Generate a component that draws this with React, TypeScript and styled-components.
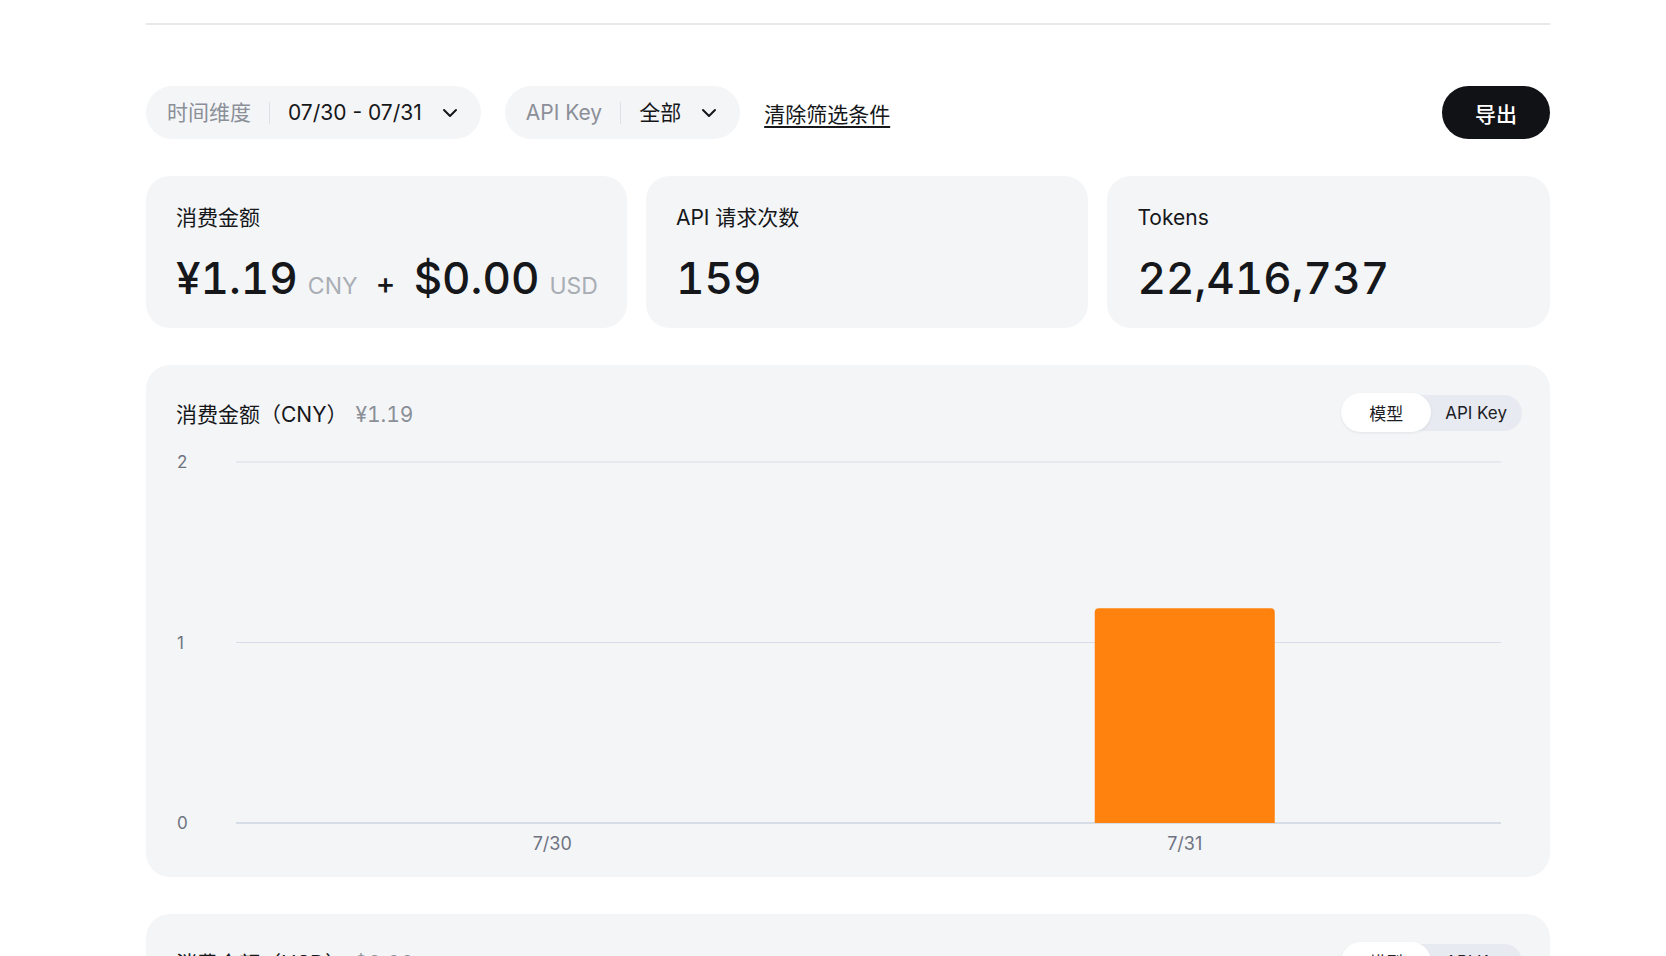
import React from "react";
import styled, { createGlobalStyle } from "styled-components";
import { ChevronDown } from "lucide-react";

const GlobalStyle = createGlobalStyle`
  html, body {
    margin: 0;
    padding: 0;
    background: #ffffff;
    overflow: hidden;
  }
  body {
    font-family: Inter, "Noto Sans CJK SC", "Noto Sans", sans-serif;
    color: #15171a;
    -webkit-font-smoothing: antialiased;
  }
  * { box-sizing: border-box; }
`;

const Page = styled.div`
  width: 1404px;
  margin-left: 146px;
  display: flex;
  flex-direction: column;
`;

const TopRule = styled.div`
  margin-top: 23px;
  height: 2px;
  background: #e7e8eb;
`;

const FilterBar = styled.div`
  margin-top: 61px;
  display: flex;
  align-items: center;
  gap: 24px;
`;

const FilterPill = styled.button`
  height: 53px;
  border: none;
  border-radius: 999px;
  background: #f4f5f7;
  display: flex;
  align-items: center;
  gap: 18px;
  padding: 0 19px 0 21px;
  font-family: inherit;
  font-size: 21px;
  line-height: 1;
  cursor: pointer;
  svg {
    margin-left: -2px;
    color: #15171a;
  }
`;

const PillLabel = styled.span`
  color: #8b8f97;
`;

const PillDivider = styled.span`
  width: 1px;
  height: 22px;
  background: #dfe1e5;
`;

const PillValue = styled.span`
  color: #15171a;
`;

const ClearLink = styled.a`
  font-size: 21px;
  color: #15171a;
  text-decoration: underline;
  text-underline-offset: 4px;
  cursor: pointer;
`;

const ExportButton = styled.button`
  margin-left: auto;
  width: 108px;
  height: 53px;
  border: none;
  border-radius: 999px;
  background: #111215;
  color: #ffffff;
  font-family: inherit;
  font-size: 21px;
  font-weight: 500;
  cursor: pointer;
`;

const StatGrid = styled.div`
  margin-top: 37px;
  display: grid;
  grid-template-columns: auto 1fr 1fr;
  gap: 19px;
`;

const StatCard = styled.div`
  height: 152px;
  border-radius: 24px;
  background: #f4f5f7;
  padding: 28px 29px 0 30px;
  display: flex;
  flex-direction: column;
`;

const StatLabel = styled.div`
  font-size: 21px;
  line-height: 28px;
  color: #15171a;
`;

const StatValueRow = styled.div`
  margin-top: 20px;
  display: flex;
  align-items: baseline;
  white-space: nowrap;
`;

const BigNumber = styled.span`
  font-size: 44px;
  line-height: 52px;
  font-weight: 500;
  letter-spacing: 0;
  font-variant-numeric: tabular-nums;
  color: #15171a;
`;

const Unit = styled.span`
  font-size: 23px;
  color: #a9adb4;
  margin-left: 10px;
`;

const Plus = styled.span`
  font-size: 30px;
  font-weight: 500;
  color: #15171a;
  margin: 0 18px 0 18px;
`;

const ChartCard = styled.section`
  margin-top: 37px;
  border-radius: 24px;
  background: #f4f5f7;
  padding: 28px 28px 17px 28px;
  display: flex;
  flex-direction: column;
`;

const ChartHeader = styled.div`
  display: flex;
  align-items: center;
  justify-content: space-between;
  height: 39px;
  padding-left: 2px;
`;

const ChartTitle = styled.div`
  font-size: 21px;
  color: #15171a;
  display: flex;
  align-items: baseline;
`;

const ChartTotal = styled.span`
  color: #8b8f97;
  margin-left: 8px;
  font-variant-numeric: tabular-nums;
`;

const Toggle = styled.div`
  height: 36px;
  display: flex;
  align-items: center;
  border-radius: 999px;
  background: #e8eaf1;
`;

const ToggleItem = styled.button<{ $active?: boolean }>`
  height: ${(p) => (p.$active ? "39px" : "36px")};
  padding: 0 ${(p) => (p.$active ? "28px" : "15px")} 0 ${(p) => (p.$active ? "28px" : "14px")};
  border: none;
  border-radius: 999px;
  background: ${(p) => (p.$active ? "#ffffff" : "transparent")};
  box-shadow: ${(p) => (p.$active ? "0 1px 3px rgba(20, 24, 40, 0.08)" : "none")};
  font-family: inherit;
  font-size: 17px;
  color: #1d2025;
  cursor: pointer;
`;

const ChartSvg = styled.svg`
  display: block;
  margin-top: 8px;
  font-family: Inter, "Noto Sans CJK SC", sans-serif;
`;

type Bar = { label: string; value: number };

const PLOT_LEFT = 62;
const PLOT_RIGHT = 1327;
const TOP_Y = 22;
const BOTTOM_Y = 383;

function BarChart({ max, bars }: { max: number; bars: Bar[] }) {
  const ticks = [max, max / 2, 0];
  const scale = (BOTTOM_Y - TOP_Y) / max;
  const band = (PLOT_RIGHT - PLOT_LEFT) / bars.length;
  const barW = 180;
  const r = 4;
  return (
    <ChartSvg width={1348} height={420} viewBox="0 0 1348 420">
      {ticks.map((t) => {
        const y = BOTTOM_Y - t * scale;
        return (
          <g key={t}>
            <line
              x1={PLOT_LEFT}
              x2={PLOT_RIGHT}
              y1={y}
              y2={y}
              stroke={t === 0 ? "#cdd4e2" : "#d7dde9"}
              strokeWidth={t === 0 ? 1.6 : 1.2}
            />
            <text x={3} y={y} dominantBaseline="central" fontSize={17} fill="#6e7381">
              {t}
            </text>
          </g>
        );
      })}
      {bars.map((b, i) => {
        const cx = PLOT_LEFT + band * i + band / 2;
        const h = b.value * scale;
        const x = cx - barW / 2;
        const y = BOTTOM_Y - h;
        return (
          <g key={b.label}>
            {h > 0 && (
              <path
                d={`M${x} ${BOTTOM_Y} V${y + r} Q${x} ${y} ${x + r} ${y} H${x + barW - r} Q${x + barW} ${y} ${x + barW} ${y + r} V${BOTTOM_Y} Z`}
                fill="#ff820e"
              />
            )}
            <text x={cx} y={403} textAnchor="middle" dominantBaseline="central" fontSize={18} fill="#6e7381">
              {b.label}
            </text>
          </g>
        );
      })}
    </ChartSvg>
  );
}

function ChartPanel({ title, total, max, bars }: { title: string; total: string; max: number; bars: Bar[] }) {
  return (
    <ChartCard>
      <ChartHeader>
        <ChartTitle>
          {title}
          <ChartTotal>{total}</ChartTotal>
        </ChartTitle>
        <Toggle>
          <ToggleItem $active>模型</ToggleItem>
          <ToggleItem>API Key</ToggleItem>
        </Toggle>
      </ChartHeader>
      <BarChart max={max} bars={bars} />
    </ChartCard>
  );
}

export default function App() {
  return (
    <>
      <GlobalStyle />
      <Page>
        <TopRule />
        <FilterBar>
          <FilterPill>
            <PillLabel>时间维度</PillLabel>
            <PillDivider />
            <PillValue>07/30 - 07/31</PillValue>
            <ChevronDown size={24} strokeWidth={2} />
          </FilterPill>
          <FilterPill>
            <PillLabel>API Key</PillLabel>
            <PillDivider />
            <PillValue>全部</PillValue>
            <ChevronDown size={24} strokeWidth={2} />
          </FilterPill>
          <ClearLink>清除筛选条件</ClearLink>
          <ExportButton>导出</ExportButton>
        </FilterBar>

        <StatGrid>
          <StatCard>
            <StatLabel>消费金额</StatLabel>
            <StatValueRow>
              <BigNumber>¥1.19</BigNumber>
              <Unit>CNY</Unit>
              <Plus>+</Plus>
              <BigNumber>$0.00</BigNumber>
              <Unit>USD</Unit>
            </StatValueRow>
          </StatCard>
          <StatCard>
            <StatLabel>API 请求次数</StatLabel>
            <StatValueRow>
              <BigNumber>159</BigNumber>
            </StatValueRow>
          </StatCard>
          <StatCard>
            <StatLabel>Tokens</StatLabel>
            <StatValueRow>
              <BigNumber>22,416,737</BigNumber>
            </StatValueRow>
          </StatCard>
        </StatGrid>

        <ChartPanel
          title="消费金额（CNY）"
          total="¥1.19"
          max={2}
          bars={[
            { label: "7/30", value: 0 },
            { label: "7/31", value: 1.19 },
          ]}
        />
        <ChartPanel
          title="消费金额（USD）"
          total="$0.00"
          max={2}
          bars={[
            { label: "7/30", value: 0 },
            { label: "7/31", value: 0 },
          ]}
        />
      </Page>
    </>
  );
}
